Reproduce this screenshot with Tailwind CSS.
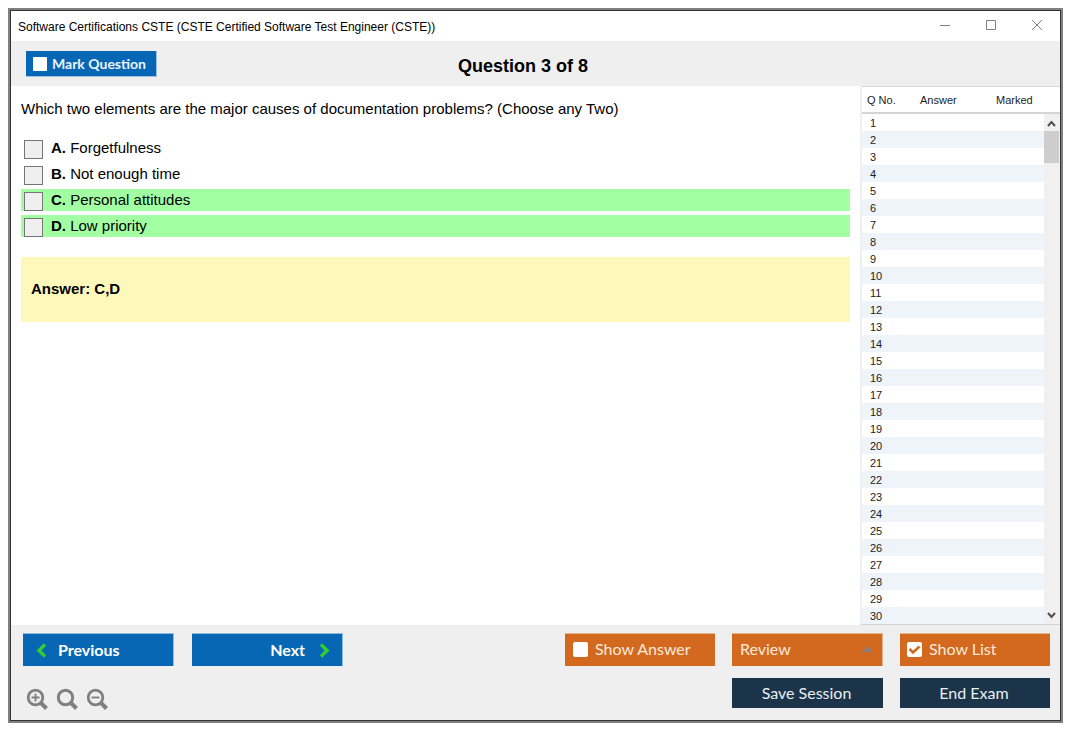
<!DOCTYPE html>
<html lang="en">
<head>
<meta charset="utf-8">
<title>Software Certifications CSTE</title>
<script src="https://cdn.jsdelivr.net/npm/@tailwindcss/browser@4"></script>
</head>
<body class="flex min-h-screen bg-white pt-2 pr-3 pb-3 pl-2 font-['Liberation_Sans',Arial,sans-serif] text-black">
<div class="flex flex-1 flex-col border-2 border-[#808080]">
<div class="flex flex-1 flex-col border border-[#333333]">

<header class="flex h-[30px] items-center justify-between bg-white pl-[7px] pr-[17px]">
  <h1 class="pt-[2px] text-[12px]">Software Certifications CSTE (CSTE Certified Software Test Engineer (CSTE))</h1>
  <div class="flex items-center gap-[34px] pb-[3px] text-[#808080]">
    <button aria-label="Minimize"><svg class="block size-3" viewBox="0 0 12 12" fill="none" stroke="currentColor"><path d="M1 6.500h10"/></svg></button>
    <button aria-label="Maximize"><svg class="block size-3" viewBox="0 0 12 12" fill="none" stroke="currentColor"><path d="M1.500 1.500h9v9h-9z"/></svg></button>
    <button aria-label="Close"><svg class="block size-3" viewBox="0 0 12 12" fill="none" stroke="currentColor"><path d="M1 1l10 10M11 1L1 11"/></svg></button>
  </div>
</header>

<div class="grid h-[45px] grid-cols-[1fr_auto_1fr] items-center bg-[#efefef] pr-[40px] pl-[15px]">
  <label class="flex h-[26px] w-[131px] items-center gap-[5px] border-r border-b border-[#9cc0e0] bg-[#0867b5] pl-[7px] font-['Lato',sans-serif] text-[14px] font-bold text-[#eaf4fb]">
    <input type="checkbox" class="mt-px size-[14px] appearance-none rounded-[1px] bg-white">Mark Question
  </label>
  <h2 class="pt-[6px] text-[18px] font-bold">Question 3 of 8</h2>
</div>

<main class="flex flex-1">
  <section class="flex-1 pt-[13px] pr-[10px] pl-[10px] text-[15px] leading-[20px]">
    <p>Which two elements are the major causes of documentation problems? (Choose any Two)</p>
    <div class="mt-[18px] flex flex-col gap-1">
      <label class="flex h-[22px] items-center gap-2 pl-[3px]"><input type="checkbox" class="mt-[2px] size-[19px] appearance-none border border-[#767676] bg-[#efefef]"><span><b>A.</b> Forgetfulness</span></label>
      <label class="flex h-[22px] items-center gap-2 pl-[3px]"><input type="checkbox" class="mt-[2px] size-[19px] appearance-none border border-[#767676] bg-[#efefef]"><span><b>B.</b> Not enough time</span></label>
      <label class="flex h-[22px] items-center gap-2 bg-[#a2ffa2] pl-[3px]"><input type="checkbox" class="mt-[2px] size-[19px] appearance-none border border-[#767676] bg-[#efefef]"><span><b>C.</b> Personal attitudes</span></label>
      <label class="flex h-[22px] items-center gap-2 bg-[#a2ffa2] pl-[3px]"><input type="checkbox" class="mt-[2px] size-[19px] appearance-none border border-[#767676] bg-[#efefef]"><span><b>D.</b> Low priority</span></label>
    </div>
    <div class="mt-5 bg-[#fef8ba] px-[10px] pt-[22px] pb-[23px] font-bold">Answer: C,D</div>
  </section>

  <aside class="flex w-[200px] border-b border-l-2 border-b-[#d4d4d4] border-l-[#f0f0f0]">
    <table class="flex-1 table-fixed border-separate border-spacing-0 text-[11px] text-[#222]">
      <thead>
        <tr class="text-left leading-[22px]">
          <th class="h-[28px] w-[54px] border-t border-b-2 border-t-[#d8d8d8] border-b-[#d4d4d4] p-0 pl-[5px] font-normal whitespace-nowrap">Q No.</th>
          <th class="w-[72px] border-t border-b-2 border-t-[#d8d8d8] border-b-[#d4d4d4] p-0 pl-1 font-normal">Answer</th>
          <th class="border-t border-b-2 border-t-[#d8d8d8] border-b-[#d4d4d4] p-0 pl-2 font-normal">Marked</th>
        </tr>
      </thead>
      <tbody id="rows"></tbody>
    </table>
    <div class="flex w-4 flex-col">
      <div class="h-[28px] border-t border-b-2 border-t-[#d8d8d8] border-b-[#d4d4d4]"></div>
      <div class="flex flex-1 flex-col bg-[#f0f0f0] pr-px text-[#505050]">
        <button aria-label="Scroll up" class="flex h-[17px] items-center justify-center pt-px"><svg class="size-[9px]" viewBox="0 0 9 9" fill="none" stroke="currentColor" stroke-width="2"><path d="M1 7l3.500-4L8 7"/></svg></button>
        <div class="h-8 bg-[#cdcdcd]"></div>
        <button aria-label="Scroll down" class="mt-auto flex h-[17px] items-center justify-center"><svg class="size-[9px]" viewBox="0 0 9 9" fill="none" stroke="currentColor" stroke-width="2"><path d="M1 2l3.500 4L8 2"/></svg></button>
      </div>
    </div>
  </aside>
</main>

<footer class="flex h-[95px] items-start justify-between bg-[#efefef] pt-[8px] pr-[10px] pl-3 font-['Lato',sans-serif] text-[16px]">
  <div>
    <div class="flex gap-[18px] font-bold text-white">
      <button class="flex h-[33px] w-[151px] items-center gap-[11px] border-t border-r border-[#8fbde0] bg-[#0867b5] pl-3"><svg class="h-[15px] w-3" viewBox="0 0 12 15" fill="none" stroke="#32cd32" stroke-width="3.500"><path d="M10 1.500L4 7.500l6 6"/></svg><span>Previous</span></button>
      <button class="flex h-[33px] w-[151px] items-center justify-end gap-[13px] border-t border-r border-[#8fbde0] bg-[#0867b5] pr-3"><span>Next</span><svg class="h-[15px] w-3" viewBox="0 0 12 15" fill="none" stroke="#32cd32" stroke-width="3.500"><path d="M3 1.500l6 6-6 6"/></svg></button>
    </div>
    <div class="mt-[22px] flex gap-2 pl-[3px] text-[#808080]">
      <button aria-label="Zoom in"><svg class="block size-[22px]" viewBox="0 0 22 22" fill="none" stroke="currentColor"><circle cx="9.500" cy="9.500" r="7.300" stroke-width="2.800"/><path d="M14.500 14.500l6 6" stroke-width="4"/><path d="M5.500 9.500h8M9.500 5.500v8" stroke-width="1.900"/></svg></button>
      <button aria-label="Reset zoom"><svg class="block size-[22px]" viewBox="0 0 22 22" fill="none" stroke="currentColor"><circle cx="9.500" cy="9.500" r="7.200" stroke-width="3"/><path d="M14.500 14.500l6 6" stroke-width="4"/></svg></button>
      <button aria-label="Zoom out"><svg class="block size-[22px]" viewBox="0 0 22 22" fill="none" stroke="currentColor"><circle cx="9.500" cy="9.500" r="7.300" stroke-width="2.800"/><path d="M14.500 14.500l6 6" stroke-width="4"/><path d="M5.500 9.500h8" stroke-width="1.900"/></svg></button>
    </div>
  </div>
  <div class="grid grid-cols-[150px_151px_150px] gap-x-[17px] gap-y-3 text-[#fbe9dc]">
    <label class="flex h-[33px] items-center gap-[7px] border-t border-[#e6b48c] bg-[#d3691f] pb-[2px] pl-2"><input type="checkbox" class="size-[15px] appearance-none rounded-[2px] bg-white">Show Answer</label>
    <button class="flex h-[33px] items-center justify-between border-t border-r border-[#e6b48c] bg-[#d3691f] pr-[9px] pb-[2px] pl-2">Review<svg class="h-[6px] w-[11px]" viewBox="0 0 11 6"><path d="M0 6L5.500 0L11 6z" fill="#8a8078"/></svg></button>
    <label class="flex h-[33px] items-center gap-[7px] border-t border-[#e6b48c] bg-[#d3691f] pb-[2px] pl-[7px]"><span class="grid"><input type="checkbox" checked class="col-start-1 row-start-1 size-[15px] appearance-none rounded-[2px] bg-white"><svg class="pointer-events-none col-start-1 row-start-1 size-[15px]" viewBox="0 0 15 15" fill="none" stroke="#d3691f" stroke-width="2.500"><path d="M2.500 7l3.500 3.500L12.500 4.500"/></svg></span>Show List</label>
    <button class="col-start-2 h-[30px] bg-[#1b344a] pr-[2px] text-[#e8eef2]">Save Session</button>
    <button class="h-[30px] bg-[#1b344a] pr-[2px] text-[#e8eef2]">End Exam</button>
  </div>
</footer>

</div>
</div>
<script>
  const rows = document.getElementById('rows');
  for (let n = 1; n <= 30; n++) {
    const tr = document.createElement('tr');
    tr.className = 'h-[17px] even:bg-[#eef4f9]';
    tr.innerHTML = '<td class="p-0 pt-px pl-2 leading-[16px]">' + n + '</td><td></td><td></td>';
    rows.append(tr);
  }
</script>
</body>
</html>
